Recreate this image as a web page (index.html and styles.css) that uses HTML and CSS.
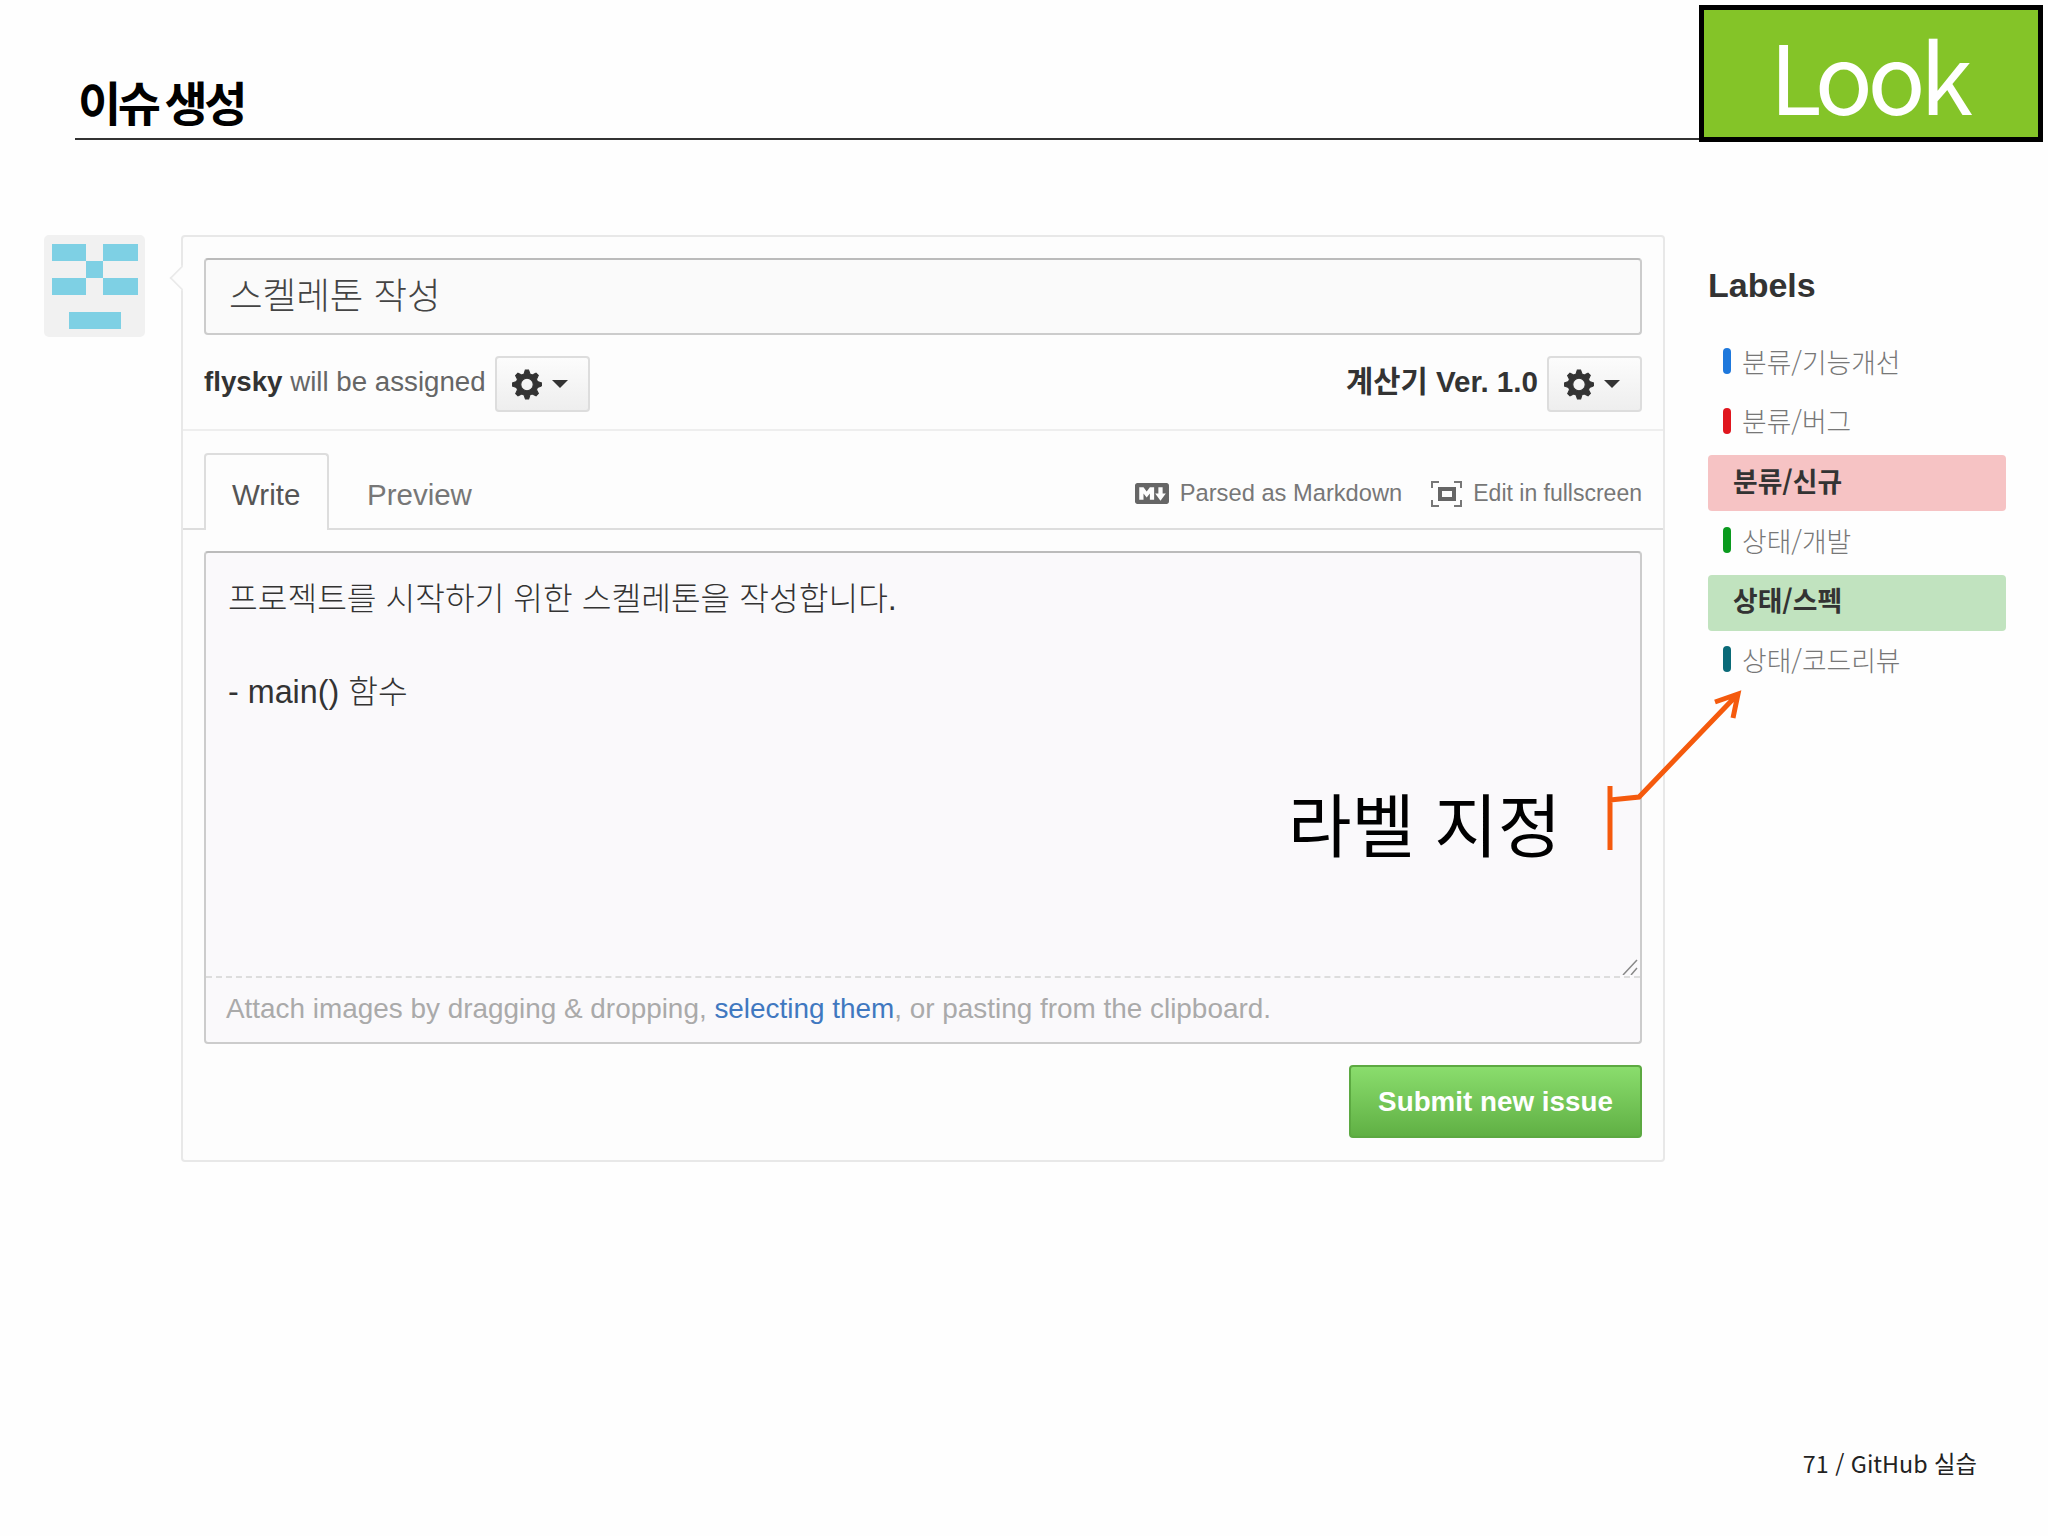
FILE: index.html
```html
<!DOCTYPE html>
<html lang="ko">
<head>
<meta charset="utf-8">
<title>이슈 생성</title>
<link rel="stylesheet" href="styles.css">
</head>
<body>
<div class="slide">
  <header class="topbar">
    <div class="title-wrap"><h1 class="title">이슈 생성</h1></div>
    <div class="look">Look</div>
  </header>

  <main class="main">
    <div class="avatar">
      <svg class="avatar-art" viewBox="0 0 86 85" width="86" height="85">
        <path fill="#7ed0e4" d="M0 0h34v17H0zM51 0h35v17H51zM34 17h17v17H34zM0 34h34v17H0zM51 34h35v17H51zM17 68h52v17H17z"/>
      </svg>
    </div>

    <section class="panel">
      <span class="notch"></span>
      <div class="head">
        <div class="title-input">스켈레톤 작성</div>
        <div class="assign-row">
          <span class="assignee"><b>flysky</b> will be assigned</span>
          <button class="gear-btn">
            <svg class="gear" viewBox="0 0 14 16"><path fill="#333" stroke="#333" stroke-width=".5" fill-rule="evenodd" d="M14 8.77v-1.6l-1.94-.64-.45-1.09.88-1.84-1.13-1.13-1.81.91-1.09-.45-.69-1.92h-1.6l-.63 1.94-1.11.45-1.84-.88-1.13 1.13.91 1.81-.45 1.09L0 7.23v1.59l1.94.64.45 1.09-.88 1.84 1.13 1.13 1.81-.91 1.09.45.69 1.92h1.59l.63-1.94 1.11-.45 1.84.88 1.13-1.13-.92-1.81.47-1.09L14 8.75v.02zM7 11c-1.66 0-3-1.34-3-3s1.34-3 3-3 3 1.34 3 3-1.34 3-3 3z"/></svg>
            <span class="caret"></span>
          </button>
          <span class="milestone">계산기 Ver. 1.0</span>
          <button class="gear-btn">
            <svg class="gear" viewBox="0 0 14 16"><path fill="#333" stroke="#333" stroke-width=".5" fill-rule="evenodd" d="M14 8.77v-1.6l-1.94-.64-.45-1.09.88-1.84-1.13-1.13-1.81.91-1.09-.45-.69-1.92h-1.6l-.63 1.94-1.11.45-1.84-.88-1.13 1.13.91 1.81-.45 1.09L0 7.23v1.59l1.94.64.45 1.09-.88 1.84 1.13 1.13 1.81-.91 1.09.45.69 1.92h1.59l.63-1.94 1.11-.45 1.84.88 1.13-1.13-.92-1.81.47-1.09L14 8.75v.02zM7 11c-1.66 0-3-1.34-3-3s1.34-3 3-3 3 1.34 3 3-1.34 3-3 3z"/></svg>
            <span class="caret"></span>
          </button>
        </div>
      </div>

      <div class="tabs">
        <a class="tab tab-active">Write</a>
        <a class="tab">Preview</a>
        <div class="tools">
          <svg class="md-icon" viewBox="0 3 16 10" preserveAspectRatio="none"><path fill="#666" fill-rule="evenodd" d="M14.85 3H1.15C.52 3 0 3.52 0 4.15v7.69C0 12.48.52 13 1.15 13h13.69c.64 0 1.15-.52 1.15-1.15v-7.7C16 3.52 15.48 3 14.85 3zM9 11H7V8L5.5 9.92 4 8v3H2V5h2l1.5 2L7 5h2v6zm2.99.5L9.5 8H11V5h2v3h1.5l-2.51 3.5z"/></svg>
          <span class="tool-text">Parsed as Markdown</span>
          <svg class="fs-icon" viewBox="0 0 31 26"><path fill="none" stroke="#777" stroke-width="2" d="M1 7V1h7M23 1h7v6M30 19v6h-7M8 25H1v-6"/><rect x="9" y="8" width="14" height="10" fill="none" stroke="#666" stroke-width="4"/></svg>
          <span class="tool-text tool-text-tight">Edit in fullscreen</span>
        </div>
      </div>

      <div class="body">
        <div class="editor">
          <div class="editor-text">
            <p>프로젝트를 시작하기 위한 스켈레톤을 작성합니다.</p>
            <p class="blank">&nbsp;</p>
            <p>- main() 함수</p>
            <svg class="resize" viewBox="0 0 16 16"><path fill="none" stroke="#888" stroke-width="1.5" d="M1 16L15 1M9 16l6-7"/></svg>
          </div>
          <div class="attach">Attach images by dragging &amp; dropping, <a class="link">selecting them</a>, or pasting from the clipboard.</div>
        </div>
        <div class="actions"><button class="submit">Submit new issue</button></div>
      </div>
    </section>

    <aside class="sidebar">
      <h2 class="labels-title">Labels</h2>
      <ul class="labels">
        <li class="label"><i class="bar bar-blue"></i>분류/기능개선</li>
        <li class="label"><i class="bar bar-red"></i>분류/버그</li>
        <li class="label label-pink">분류/신규</li>
        <li class="label"><i class="bar bar-green"></i>상태/개발</li>
        <li class="label label-green">상태/스펙</li>
        <li class="label"><i class="bar bar-teal"></i>상태/코드리뷰</li>
      </ul>
    </aside>
  </main>

  <div class="callout">라벨 지정</div>
  <svg class="arrow" viewBox="0 0 2048 1536" width="2048" height="1536">
    <path fill="none" stroke="#f55a0d" stroke-width="5" d="M1610 786V850M1610 800L1639 797L1737 695M1715 702L1738 694L1733 718"/>
  </svg>

  <footer class="footer">71 / GitHub 실습</footer>
</div>
</body>
</html>
```
FILE: styles.css
```css
* { box-sizing: border-box; }
html, body { margin: 0; padding: 0; background: #fff; }
.slide {
  position: relative;
  width: 2048px;
  height: 1536px;
  overflow: hidden;
  display: flex;
  flex-direction: column;
  background: #fefefe;
  font-family: "Liberation Sans", "Noto Sans CJK KR", sans-serif;
}

/* header */
.topbar { display: flex; align-items: flex-end; padding: 5px 5px 0 75px; }
.title-wrap { flex: 1; border-bottom: 2px solid #333; margin-bottom: 2px; padding-left: 3px; }
.title {
  margin: 0;
  font: 700 47px/60px "Noto Sans CJK KR", sans-serif;
  letter-spacing: -3.4px;
  word-spacing: -3px;
  color: #000;
  padding-bottom: 7px;
}
.look {
  width: 344px;
  height: 137px;
  padding-right: 5px;
  border: 5px solid #000;
  background: #84c428;
  color: #fff;
  font: 400 96px/127px "Noto Sans CJK KR", sans-serif;
  letter-spacing: -5.6px;
  text-align: center;
}

/* main */
.main { display: flex; align-items: flex-start; margin-top: 93px; padding-left: 44px; }
.avatar {
  width: 101px;
  height: 102px;
  margin-right: 36px;
  padding: 9px 8px;
  background: #f1f1f1;
  border-radius: 5px;
}
.avatar-art { display: block; }

.panel {
  position: relative;
  width: 1484px;
  margin-right: 43px;
  background: #fdfdfd;
  border: 2px solid #e8e8e8;
  border-radius: 4px;
}
.notch {
  position: absolute;
  left: -12px;
  top: 30px;
  width: 22px;
  height: 22px;
  background: #fdfdfd;
  border-left: 2px solid #eaeaea;
  border-bottom: 2px solid #eaeaea;
  transform: rotate(45deg) scale(.8);
}
.head { padding: 21px 21px 17px; border-bottom: 2px solid #eee; }
.title-input {
  height: 77px;
  padding-left: 23px;
  background: #fafafa;
  border: 2px solid #ccc;
  border-top-color: #bbb;
  border-radius: 4px;
  font: 300 36.5px/67px "Noto Sans CJK KR", sans-serif;
  color: #444;
}
.assign-row { display: flex; align-items: center; margin-top: 21px; height: 56px; }
.assignee { font-size: 27.7px; color: #666; position: relative; top: -2px; }
.assignee b { color: #333; }
.milestone { margin-left: auto; font-size: 29.6px; font-weight: 700; color: #333; position: relative; top: -5px; }
.gear-btn {
  display: flex;
  align-items: center;
  width: 95px;
  height: 56px;
  margin-left: 9px;
  padding: 0 0 0 15px;
  background: linear-gradient(#fcfcfc, #eeeeee);
  border: 2px solid #ddd;
  border-radius: 4px;
}
.gear { width: 30px; height: 33px; display: block; }
.caret {
  margin-left: 10px;
  width: 0;
  height: 0;
  border-left: 8px solid transparent;
  border-right: 8px solid transparent;
  border-top: 8px solid #333;
}

/* tabs */
.tabs {
  display: flex;
  align-items: flex-end;
  height: 99px;
  padding: 21px 21px 0;
  border-bottom: 2px solid #ddd;
}
.tab {
  display: block;
  height: 77px;
  margin-bottom: -2px;
  padding: 0 36px;
  font-size: 29.5px;
  line-height: 79px;
  color: #777;
  border: 2px solid transparent;
  border-bottom: 0;
}
.tab-active {
  width: 125px;
  padding: 0 0 0 26px;
  color: #555;
  background: #fdfdfd;
  border-color: #ddd;
  border-radius: 4px 4px 0 0;
}
.tools { display: flex; align-items: center; margin-left: auto; height: 76px; padding-top: 7px; }
.md-icon { width: 34px; height: 21px; margin-right: 11px; }
.fs-icon { width: 31px; height: 26px; margin-left: 29px; margin-right: 11px; }
.tool-text { font-size: 23.7px; color: #777; }
.tool-text-tight { font-size: 23px; }

/* editor */
.body { padding: 21px 21px 22px; }
.editor {
  height: 493px;
  display: flex;
  flex-direction: column;
  background: #faf9fb;
  border: 2px solid #ccc;
  border-top-color: #bbb;
  border-radius: 4px;
}
.editor-text {
  position: relative;
  flex: 1;
  padding: 23px 22px 0;
  font: 300 32.3px/46.5px "Liberation Sans", "Noto Sans CJK KR", sans-serif;
  color: #333;
}
.editor-text p { margin: 0; }
.resize { position: absolute; right: 2px; bottom: 1px; width: 16px; height: 16px; }
.attach {
  height: 66px;
  padding: 0 20px;
  border-top: 2px dashed #ddd;
  font-size: 27.9px;
  line-height: 61px;
  color: #aaa;
}
.link { color: #4078c0; }
.actions { display: flex; justify-content: flex-end; margin-top: 21px; }
.submit {
  width: 293px;
  height: 73px;
  padding: 0;
  background: linear-gradient(#8add6d, #60b044);
  border: 2px solid #5ca941;
  border-radius: 4px;
  color: #fff;
  font: 700 27.8px "Liberation Sans", sans-serif;
}

/* sidebar */
.sidebar { width: 298px; margin-left: 0; }
.labels-title { margin: 30px 0 0; font-size: 34px; line-height: 40px; color: #333; }
.labels { list-style: none; margin: 31px 0 0; padding: 0; display: flex; flex-direction: column; gap: 3.7px; }
.label {
  display: flex;
  align-items: center;
  height: 56px;
  padding: 0 0 6px 15px;
  font: 300 26.8px "Noto Sans CJK KR", sans-serif;
  color: #777;
}
.bar { width: 8px; height: 26px; margin-right: 11px; border-radius: 4px; }
.bar-blue { background: #1e78dc; }
.bar-red { background: #e0161e; }
.bar-green { background: #0a9a1e; }
.bar-teal { background: #0a6a78; }
.label-pink, .label-green { padding-left: 25px; font-weight: 700; color: #333; border-radius: 4px; }
.label-pink { background: #f6c3c4; }
.label-green { background: #c1e3bf; }

/* overlays */
.callout {
  position: absolute;
  left: 1288px;
  top: 773px;
  font: 400 69px/98px "Noto Sans CJK KR", sans-serif;
  color: #000;
}
.arrow { position: absolute; left: 0; top: 0; pointer-events: none; }

.footer {
  margin-top: auto;
  padding: 0 71px 56px 0;
  text-align: right;
  font: 400 23.3px/34px "Noto Sans CJK KR", sans-serif;
  color: #222;
}
```
